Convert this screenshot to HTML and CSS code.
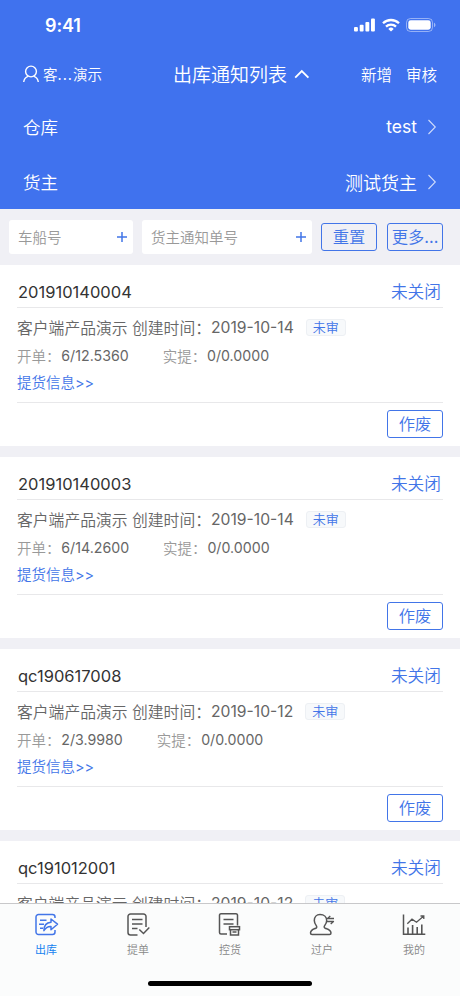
FILE: index.html
```html
<!DOCTYPE html>
<html lang="zh-CN">
<head>
<meta charset="utf-8">
<title>出库通知列表</title>
<link rel="stylesheet" href="styles.css">
</head>
<body>
<div class="app">
  <header class="header">
    <div class="status">
      <span class="time">9:41</span>
      <div class="status-icons">
        <svg width="22" height="14" viewBox="0 0 22 14" fill="#fff"><rect x="0" y="9" width="3.9" height="4.6" rx="1"/><rect x="5.7" y="6.7" width="3.9" height="6.9" rx="1"/><rect x="11.4" y="3.9" width="3.9" height="9.7" rx="1"/><rect x="17" y="0.6" width="3.9" height="13" rx="1"/></svg>
        <svg width="18" height="14" viewBox="0 0 18 14" fill="none" stroke="#fff" stroke-width="2.3"><path d="M1 5.3a11.4 11.4 0 0 1 16 0"/><path d="M4 8.6a7.1 7.1 0 0 1 10 0"/><path d="M9 13.6L6.3 10.9a3.9 3.9 0 0 1 5.4 0Z" fill="#fff" stroke="none"/></svg>
        <svg width="30" height="14" viewBox="0 0 30 14"><rect x="0.5" y="0.5" width="26" height="13" rx="4" fill="none" stroke="#fff" stroke-opacity=".45"/><rect x="2.3" y="2.3" width="22.4" height="9.4" rx="2.4" fill="#fff"/><path d="M28 4.8c1.9.7 1.9 3.7 0 4.4Z" fill="#fff" fill-opacity=".5"/></svg>
      </div>
    </div>
    <nav class="nav">
      <div class="user">
        <svg width="18" height="18" viewBox="0 0 18 18" fill="none" stroke="#fff" stroke-width="1.4"><circle cx="8" cy="6.5" r="5.400"/><path d="M.7 17c.4-2.700 2-4.800 4.300-5.600M15.300 17c-.4-2.700-2-4.800-4.300-5.600"/></svg>
        <span>客<span class="dots">...</span>演示</span>
      </div>
      <div class="title"><span>出库通知列表</span><svg width="16" height="10" viewBox="0 0 16 10" fill="none" stroke="#fff" stroke-width="1.8"><path d="M1.200 8.700L7.800 2l6.600 6.700"/></svg></div>
      <div class="actions"><span>新增</span><span>审核</span></div>
    </nav>
    <div class="pick"><span>仓库</span><span class="value latin">test</span><svg class="chev" width="9" height="16" viewBox="0 0 9 16" fill="none" stroke="#fff" stroke-opacity=".75" stroke-width="1.100"><path d="M.500 1l6.800 7L.500 15"/></svg></div>
    <div class="pick"><span>货主</span><span class="value">测试货主</span><svg class="chev" width="9" height="16" viewBox="0 0 9 16" fill="none" stroke="#fff" stroke-opacity=".75" stroke-width="1.100"><path d="M.500 1l6.800 7L.500 15"/></svg></div>
  </header>

  <section class="filters">
    <div class="field field-ship"><span>车船号</span><svg width="10" height="10" viewBox="0 0 10 10" stroke="#4275e8" stroke-width="1.500"><path d="M0 5h10M5 0v10"/></svg></div>
    <div class="field field-order"><span>货主通知单号</span><svg width="10" height="10" viewBox="0 0 10 10" stroke="#4275e8" stroke-width="1.500"><path d="M0 5h10M5 0v10"/></svg></div>
    <div class="btn reset">重置</div>
    <div class="btn more">更多<span class="latin-text">...</span></div>
  </section>

  <main class="list">
    <article class="card">
      <div class="card-head"><span class="no">201910140004</span><span class="state">未关闭</span></div>
      <div class="card-body">
        <div class="info">客户端产品演示 创建时间：<span class="date">2019-10-14</span><span class="tag">未审</span></div>
        <div class="amounts"><span class="label">开单：</span><span class="num">6/12.5360</span><span class="label second">实提：</span><span class="num">0/0.0000</span></div>
        <div class="link">提货信息<span class="latin-text">&gt;&gt;</span></div>
      </div>
      <div class="card-foot"><div class="btn">作废</div></div>
    </article>
    <article class="card">
      <div class="card-head"><span class="no">201910140003</span><span class="state">未关闭</span></div>
      <div class="card-body">
        <div class="info">客户端产品演示 创建时间：<span class="date">2019-10-14</span><span class="tag">未审</span></div>
        <div class="amounts"><span class="label">开单：</span><span class="num">6/14.2600</span><span class="label second">实提：</span><span class="num">0/0.0000</span></div>
        <div class="link">提货信息<span class="latin-text">&gt;&gt;</span></div>
      </div>
      <div class="card-foot"><div class="btn">作废</div></div>
    </article>
    <article class="card">
      <div class="card-head"><span class="no">qc190617008</span><span class="state">未关闭</span></div>
      <div class="card-body">
        <div class="info">客户端产品演示 创建时间：<span class="date">2019-10-12</span><span class="tag">未审</span></div>
        <div class="amounts"><span class="label">开单：</span><span class="num">2/3.9980</span><span class="label second">实提：</span><span class="num">0/0.0000</span></div>
        <div class="link">提货信息<span class="latin-text">&gt;&gt;</span></div>
      </div>
      <div class="card-foot"><div class="btn">作废</div></div>
    </article>
    <article class="card">
      <div class="card-head"><span class="no">qc191012001</span><span class="state">未关闭</span></div>
      <div class="card-body">
        <div class="info">客户端产品演示 创建时间：<span class="date">2019-10-12</span><span class="tag">未审</span></div>
      </div>
    </article>
  </main>

  <footer class="tabbar">
    <div class="tabs">
      <div class="tab active">
        <svg width="26" height="24" viewBox="0 0 26 24" fill="none" stroke="#4275e8" stroke-width="1.500" stroke-linejoin="round"><path d="M22 5V4a2.500 2.500 0 0 0-2.500-2.500h-14A2.500 2.500 0 0 0 3 4v15a2.500 2.500 0 0 0 2.500 2.500h14A2.500 2.500 0 0 0 22 19v-2"/><path d="M7 7.200h6.500M6 11.200h5M7 15.200h3"/><path d="M18 6l6.500 5.200-6.500 5.600v-3.400c-3.500-.2-5.500 1.300-7.100 4.300 0-5 2.400-8.200 7.100-8.500Z"/></svg>
        <span>出库</span>
      </div>
      <div class="tab">
        <svg width="26" height="24" viewBox="0 0 26 24" fill="none" stroke="#555" stroke-width="1.500"><path d="M12.500 22H5.500A2.500 2.500 0 0 1 3 19.500v-16A2.500 2.500 0 0 1 5.500 1h13A2.500 2.500 0 0 1 21 3.500V14"/><path d="M7 6.500h10.500M7 11h10.500M7 15.500h5.500M14.300 16.500l4.200 4 5.800-6"/></svg>
        <span>提单</span>
      </div>
      <div class="tab">
        <svg width="26" height="24" viewBox="0 0 26 24" fill="none" stroke="#555" stroke-width="1.500"><path d="M10 21H4a1.500 1.500 0 0 1-1.500-1.500V2A1.500 1.500 0 0 1 4 .8h15A1.500 1.500 0 0 1 20.500 2v10.500"/><path d="M6.500 6.500h10M6.500 11h10"/><rect x="12.500" y="13.700" width="10" height="3"/><path d="M13.500 16.500V22h8v-5.500M15.500 19h4"/></svg>
        <span>控货</span>
      </div>
      <div class="tab">
        <svg width="26" height="24" viewBox="0 0 26 24" fill="none" stroke="#555" stroke-width="1.500" stroke-linejoin="round"><path d="M11 1.500c-3.500 0-5.700 2.600-5.700 5.900 0 2.500 1 4 2.100 5.500.6.900.4 1.900-.6 2.300-2.900 1.200-5.300 1.800-5.300 4.900 0 .9.700 1.500 1.600 1.500h17.300c1 0 1.600-.6 1.600-1.500 0-3.100-3.200-3.900-5.800-4.900-1-.4-1.300-1.400-.7-2.300 1.200-1.700 2.200-3 2.200-5.500 0-3.300-2.500-5.900-6.700-5.900Z"/><path d="M25 5.500h-6.500l2.800-2.500M18 8.500h6.500l-2.800 2.500" stroke-width="1.300"/></svg>
        <span>过户</span>
      </div>
      <div class="tab">
        <svg width="26" height="24" viewBox="0 0 26 24" fill="none" stroke="#555" stroke-width="1.500"><path d="M2.500 1.500v19.800h21.800"/><path d="M7 21v-6.500M11.600 21V12M16.200 21v-7M20.800 21v-9.500" stroke-width="1.600"/><path d="M6.300 10.800l4.700-4.600 4.500 3 7-6M19.500 3h3.300v3" stroke-width="1.300"/></svg>
        <span>我的</span>
      </div>
    </div>
    <div class="home"></div>
  </footer>
</div>
</body>
</html>
```
FILE: styles.css
```css
* { box-sizing: border-box; }
body {
  margin: 0;
  font-family: Inter, "Noto Sans CJK SC", sans-serif;
  font-weight: 350;
  background: #f0f0f5;
}
svg { display: block; flex: none; }
.app {
  width: 460px;
  height: 996px;
  display: flex;
  flex-direction: column;
  overflow: hidden;
  position: relative;
  white-space: nowrap;
}
.header {
  height: 209px;
  flex: none;
  background: #4072ee;
  color: #fff;
}
.status {
  height: 50px;
  padding: 0 24px 0 45px;
  display: flex;
  align-items: center;
  justify-content: space-between;
}
.time { font-size: 18px; font-weight: 600; line-height: 20px; padding-top: 2px; letter-spacing: -.1px; }
.status-icons { display: flex; gap: 6px; }
.nav {
  height: 47px;
  margin-bottom: 2px;
  padding: 0 23px;
  display: flex;
  align-items: center;
}
.user { width: 150px; display: flex; align-items: center; gap: 2px; font-size: 14.5px; }
.dots { font-weight: 400; letter-spacing: 1px; }
.title { display: flex; align-items: center; gap: 7px; font-size: 19px; }
.actions { margin-left: auto; display: flex; gap: 14px; font-size: 15.5px; }
.pick {
  height: 55px;
  padding: 0 23px;
  display: flex;
  align-items: center;
  font-size: 17.5px;
}
.value { margin-left: auto; font-size: 18px; }
.latin { font-weight: 400; font-size: 17.5px; }
.latin-text { font-weight: 400; }
.chev { margin-left: 11px; }
.filters {
  height: 56px;
  flex: none;
  padding: 0 17px 0 9px;
  display: flex;
  align-items: center;
}
.field {
  height: 34px;
  background: #fff;
  border-radius: 3px;
  display: flex;
  align-items: center;
  justify-content: space-between;
  padding: 0 6px 0 9px;
  font-size: 14.5px;
  color: #999;
}
.field span { padding-bottom: 2px; }
.field-ship { width: 124px; margin-right: 9px; }
.field-order { width: 170px; }
.btn {
  width: 56px;
  height: 28px;
  border: 1.5px solid #4275e8;
  border-radius: 3px;
  color: #4275e8;
  font-size: 16.3px;
  line-height: 27px;
  text-align: center;
}
.reset { margin-left: 9px; }
.more { margin-left: auto; }
.list { display: flex; flex-direction: column; gap: 11px; }
.card { height: 181px; flex: none; background: #fff; padding: 0 17px; }
.card-head {
  height: 43px;
  padding: 10px 2px 0 1px;
  display: flex;
  align-items: center;
  justify-content: space-between;
  border-bottom: 1px solid #e8e8ea;
}
.no { font-size: 16.5px; font-weight: 400; color: #333; padding-top: 1px; }
.state { font-size: 16.7px; color: #4275e8; }
.card-body { height: 94px; padding-top: 7px; }
.info { height: 25px; display: flex; align-items: center; font-size: 15.8px; color: #666; white-space: pre; }
.date { font-size: 15.7px; font-weight: 400; }
.tag {
  margin-left: 12px;
  width: 40px;
  height: 17px;
  line-height: 15px;
  border: 1px solid #edf0f4;
  border-radius: 3px;
  background: #f7f9fb;
  color: #4275e8;
  font-size: 13px;
  text-align: center;
}
.amounts { height: 30px; display: flex; align-items: center; font-size: 14.5px; color: #999; }
.num { font-size: 14.2px; font-weight: 400; color: #666; margin-left: .8px; }
.second { margin-left: 34px; }
.link { height: 26px; line-height: 26px; font-size: 14.5px; color: #4275e8; }
.card-foot {
  height: 44px;
  border-top: 1px solid #e8e8ea;
  padding-top: 7px;
  display: flex;
  justify-content: flex-end;
}
.tabbar {
  position: absolute;
  left: 0;
  bottom: 0;
  width: 460px;
  height: 93px;
  background: #fbfcfc;
  border-top: 1px solid #c8c8ca;
}
.tabs { display: grid; grid-template-columns: repeat(5, 1fr); }
.tab {
  height: 77px;
  padding-top: 9px;
  display: flex;
  flex-direction: column;
  align-items: center;
  gap: 5px;
  font-size: 11px;
  line-height: 16px;
  color: #888;
}
.active { color: #1683f0; font-weight: 400; }
.home { width: 164px; height: 5px; border-radius: 3px; background: #000; margin: 0 auto; }
```
